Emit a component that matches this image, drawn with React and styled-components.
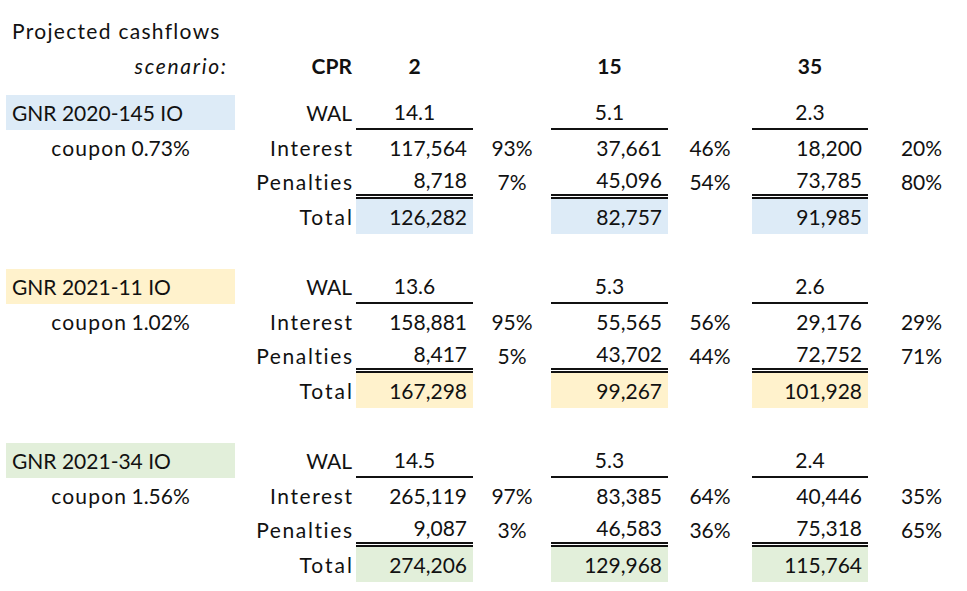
import React from "react";
import styled, { createGlobalStyle } from "styled-components";

const Global = createGlobalStyle`
  html, body { margin: 0; padding: 0; background: #fff; }
  body { font-family: Lato, "Liberation Sans", sans-serif; color: #111; }
`;

const COLS = "229px 121px 117px 78px 117px 84px 116px 107px";

const Sheet = styled.div`
  padding: 13px 0 0 6px;
  font-size: 21px;
  line-height: 1;
`;

const Row = styled.div`
  display: grid;
  grid-template-columns: ${COLS};
  height: ${(p) => p.$h || 34.8}px;
`;

const bgs = { blue: "#DDEBF7", orange: "#FFF2CC", green: "#E2EFDA" };

const Cell = styled.div`
  display: flex;
  align-items: center;
  justify-content: ${(p) =>
    p.$align === "right" ? "flex-end" : p.$align === "center" ? "center" : "flex-start"};
  padding: 0 ${(p) => p.$pr ?? 6}px 0 ${(p) => p.$pl ?? 6}px;
  background: ${(p) => (p.$bg ? bgs[p.$bg] : "transparent")};
  font-weight: ${(p) => (p.$bold ? 700 : 400)};
  font-style: ${(p) => (p.$italic ? "italic" : "normal")};
  border-bottom: ${(p) =>
    p.$line === "single" ? "2px solid #111" : p.$line === "double" ? "5px double #111" : "none"};
  box-sizing: border-box;
  white-space: nowrap;
`;

/* lowercase words: Calibri-like width */
const Word = styled.span`
  letter-spacing: ${(p) => p.$ls ?? 1.6}px;
  margin-right: ${(p) => -(p.$ls ?? 1.6)}px;
`;

const Title = styled.div`
  height: 35px;
  display: flex;
  align-items: center;
  padding-left: 6px;
`;

const groups = [
  {
    name: "GNR 2020-145 IO",
    coupon: "0.73%",
    bg: "blue",
    wal: ["14.1", "5.1", "2.3"],
    interest: [["117,564", "93%"], ["37,661", "46%"], ["18,200", "20%"]],
    penalties: [["8,718", "7%"], ["45,096", "54%"], ["73,785", "80%"]],
    total: ["126,282", "82,757", "91,985"],
  },
  {
    name: "GNR 2021-11 IO",
    coupon: "1.02%",
    bg: "orange",
    wal: ["13.6", "5.3", "2.6"],
    interest: [["158,881", "95%"], ["55,565", "56%"], ["29,176", "29%"]],
    penalties: [["8,417", "5%"], ["43,702", "44%"], ["72,752", "71%"]],
    total: ["167,298", "99,267", "101,928"],
  },
  {
    name: "GNR 2021-34 IO",
    coupon: "1.56%",
    bg: "green",
    wal: ["14.5", "5.3", "2.4"],
    interest: [["265,119", "97%"], ["83,385", "64%"], ["40,446", "35%"]],
    penalties: [["9,087", "3%"], ["46,583", "36%"], ["75,318", "65%"]],
    total: ["274,206", "129,968", "115,764"],
  },
];

function Group({ g }) {
  return (
    <>
      <Row>
        <Cell $bg={g.bg}>{g.name}</Cell>
        <Cell $align="right" $pr={4}>WAL</Cell>
        {g.wal.map((w, i) => (
          <React.Fragment key={i}>
            <Cell $align="center" $line="single">{w}</Cell>
            <Cell />
          </React.Fragment>
        ))}
      </Row>
      <Row>
        <Cell $align="center">
          <Word $ls={1.2}>coupon</Word>&nbsp;{g.coupon}
        </Cell>
        <Cell $align="right" $pr={4}><Word>Interest</Word></Cell>
        {g.interest.map(([v, p], i) => (
          <React.Fragment key={i}>
            <Cell $align="right">{v}</Cell>
            <Cell $align="center">{p}</Cell>
          </React.Fragment>
        ))}
      </Row>
      <Row>
        <Cell />
        <Cell $align="right" $pr={4}><Word>Penalties</Word></Cell>
        {g.penalties.map(([v, p], i) => (
          <React.Fragment key={i}>
            <Cell $align="right" $line="double">{v}</Cell>
            <Cell $align="center">{p}</Cell>
          </React.Fragment>
        ))}
      </Row>
      <Row>
        <Cell />
        <Cell $align="right" $pr={4}><Word $ls={2}>Total</Word></Cell>
        {g.total.map((t, i) => (
          <React.Fragment key={i}>
            <Cell $align="right" $bg={g.bg}>{t}</Cell>
            <Cell />
          </React.Fragment>
        ))}
      </Row>
    </>
  );
}

export default function App() {
  return (
    <>
      <Global />
      <Sheet>
        <Title><Word $ls={1.3}>Projected cashflows</Word></Title>
        <Row $h={35}>
          <Cell $align="right" $italic $pr={9}><Word $ls={1.7}>scenario:</Word></Cell>
          <Cell $align="right" $bold $pr={4}>CPR</Cell>
          <Cell $align="center" $bold>2</Cell>
          <Cell />
          <Cell $align="center" $bold>15</Cell>
          <Cell />
          <Cell $align="center" $bold>35</Cell>
          <Cell />
        </Row>
        <Row $h={12} />
        {groups.map((g, i) => (
          <React.Fragment key={i}>
            {i > 0 && <Row />}
            <Group g={g} />
          </React.Fragment>
        ))}
      </Sheet>
    </>
  );
}
